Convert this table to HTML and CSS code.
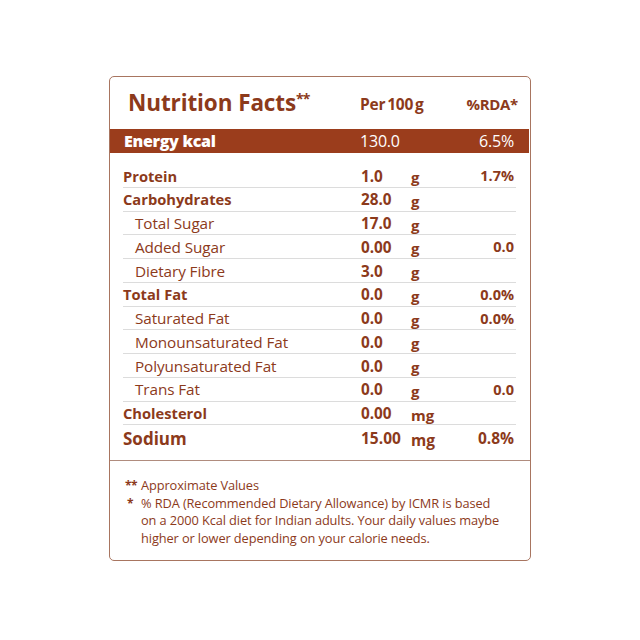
FILE: index.html
```html
<!DOCTYPE html>
<html lang="en">
<head>
<meta charset="utf-8">
<title>Nutrition Facts</title>
<link rel="stylesheet" href="styles.css">
</head>
<body>
<div class="card">
  <div class="head">
    <div class="title">Nutrition Facts<sup>**</sup></div>
    <div class="per">Per 100 g</div>
    <div class="rda-h">%RDA*</div>
  </div>
  <div class="band">
    <div class="band-name">Energy kcal</div>
    <div class="band-val">130.0</div>
    <div class="band-rda">6.5%</div>
  </div>
  <div class="rows">
    <div class="row main"><span class="n">Protein</span><span class="v">1.0</span><span class="u">g</span><span class="r">1.7%</span></div>
    <div class="row main"><span class="n">Carbohydrates</span><span class="v">28.0</span><span class="u">g</span><span class="r"></span></div>
    <div class="row sub"><span class="n">Total Sugar</span><span class="v">17.0</span><span class="u">g</span><span class="r"></span></div>
    <div class="row sub"><span class="n">Added Sugar</span><span class="v">0.00</span><span class="u">g</span><span class="r">0.0</span></div>
    <div class="row sub"><span class="n">Dietary Fibre</span><span class="v">3.0</span><span class="u">g</span><span class="r"></span></div>
    <div class="row main"><span class="n">Total Fat</span><span class="v">0.0</span><span class="u">g</span><span class="r">0.0%</span></div>
    <div class="row sub"><span class="n">Saturated Fat</span><span class="v">0.0</span><span class="u">g</span><span class="r">0.0%</span></div>
    <div class="row sub"><span class="n">Monounsaturated Fat</span><span class="v">0.0</span><span class="u">g</span><span class="r"></span></div>
    <div class="row sub"><span class="n">Polyunsaturated Fat</span><span class="v">0.0</span><span class="u">g</span><span class="r"></span></div>
    <div class="row sub"><span class="n">Trans Fat</span><span class="v">0.0</span><span class="u">g</span><span class="r">0.0</span></div>
    <div class="row main"><span class="n">Cholesterol</span><span class="v">0.00</span><span class="u">mg</span><span class="r"></span></div>
    <div class="row main last"><span class="n">Sodium</span><span class="v">15.00</span><span class="u">mg</span><span class="r">0.8%</span></div>
  </div>
  <div class="notes">
    <div class="note"><span class="mark">**</span><span class="txt">Approximate Values</span></div>
    <div class="note"><span class="mark single">*</span><span class="txt">% RDA (Recommended Dietary Allowance) by ICMR is based<br>on a 2000 Kcal diet for Indian adults. Your daily values maybe<br>higher or lower depending on your calorie needs.</span></div>
  </div>
</div>
</body>
</html>
```

FILE: styles.css
```css
* { box-sizing: border-box; }
html, body { margin: 0; padding: 0; background: #ffffff; }
body { font-family: "Open Sans", Lato, sans-serif; color: #8c3a1b; }

.card {
  margin: 76px 0 0 109px;
  width: 422px;
  height: 485px;
  border: 1px solid #a87560;
  border-radius: 5px;
  display: flex;
  flex-direction: column;
}

.head {
  height: 52px;
  display: flex;
  align-items: center;
  padding: 0 12px 2px 18px;
}
.title {
  font-size: 22.5px;
  font-weight: 700;
  letter-spacing: -0.1px;
  width: 232px;
  white-space: nowrap;
}
.title sup {
  font-size: 14px;
  vertical-align: 7px;
  line-height: 0;
  letter-spacing: -1px;
}
.per {
  font-size: 15.5px;
  font-weight: 700;
  word-spacing: -2px;
  letter-spacing: -0.2px;
  margin-top: 4px;
}
.rda-h {
  margin-left: auto;
  font-size: 15px;
  font-weight: 700;
  letter-spacing: -0.3px;
  margin-top: 4px;
}

.band {
  height: 24px;
  background: #9b3d1c;
  color: #ffffff;
  display: flex;
  align-items: center;
  padding: 0 15px 0 14px;
  margin-right: 1px;
}
.band-name {
  font-size: 16px;
  font-weight: 800;
  letter-spacing: -0.3px;
  width: 236px;
}
.band-val {
  font-size: 16px;
  font-weight: 400;
  letter-spacing: -0.2px;
}
.band-rda {
  margin-left: auto;
  font-size: 16px;
  font-weight: 400;
  letter-spacing: -0.2px;
}

.rows {
  padding: 11px 14px 0 13px;
}
.row {
  height: 23.75px;
  border-bottom: 1px solid #dcdcdc;
  display: grid;
  grid-template-columns: 238px 50px 1fr auto;
  align-items: center;
  padding-right: 2px;
}
.row.last {
  border-bottom: none;
  height: 26px;
}
.n { font-size: 14.7px; }
.main .n { font-weight: 700; }
.sub .n { font-weight: 400; padding-left: 12px; font-size: 15.3px; letter-spacing: -0.1px; }
.v { font-size: 15.3px; font-weight: 700; }
.u { font-size: 15px; font-weight: 700; padding-top: 3px; }
.r { font-size: 14.5px; font-weight: 700; text-align: right; }
.last .n { font-size: 17px; }
.last .v, .last .u, .last .r { font-size: 15.5px; }

.notes {
  margin-top: auto;
  border-top: 1px solid #b08c7e;
  padding: 16px 8px 0 15px;
  height: 100px;
}
.note {
  display: flex;
  font-size: 12.8px;
  line-height: 17.7px;
  letter-spacing: -0.1px;
  white-space: nowrap;
}
.mark {
  width: 16px;
  flex: none;
  font-weight: 700;
  font-size: 12px;
  letter-spacing: -0.5px;
}
.mark.single { padding-left: 2px; }
.txt { flex: 1; }
```
